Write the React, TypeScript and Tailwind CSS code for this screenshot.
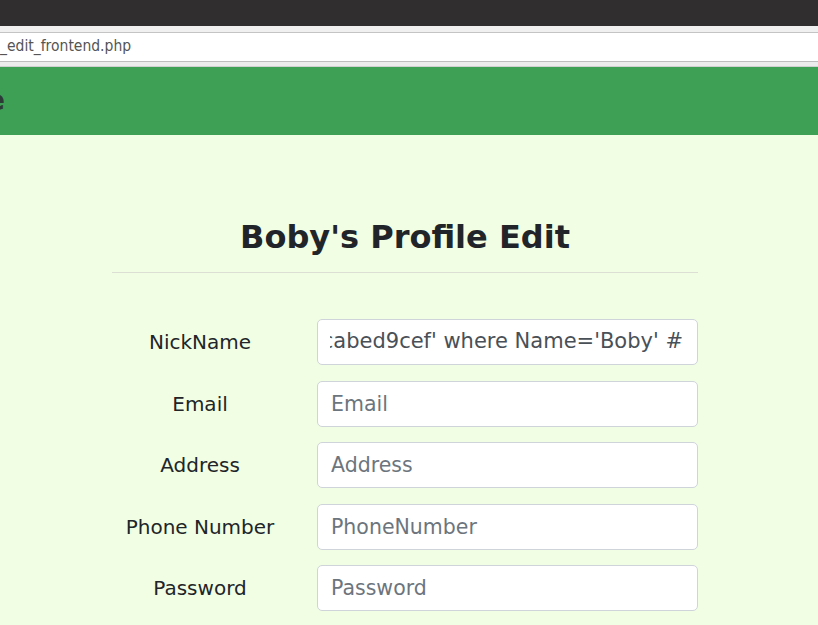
const fields = [
  { label: "Email", placeholder: "Email" },
  { label: "Address", placeholder: "Address" },
  { label: "Phone Number", placeholder: "PhoneNumber" },
  { label: "Password", placeholder: "Password" },
];

export default function App() {
  return (
    <div className="w-[818px] h-[625px] overflow-hidden bg-[#f2fee4] font-['DejaVu_Sans',sans-serif]">
      {/* browser chrome */}
      <div className="h-[26px] bg-[#302e2e]" />
      <div className="h-[7px] bg-[#f0f0f0] border-b border-[#c4c4c4]" />
      <div className="h-[29px] bg-white border-b border-[#bdbdbd] flex items-center">
        <span className="text-[15.5px] text-[#555] font-['DejaVu_Sans_Condensed',sans-serif] leading-none">
          _edit_frontend.php
        </span>
      </div>
      <div className="h-[5px] bg-[#ececec] border-b border-[#d0d0d0]" />

      {/* navbar */}
      <div className="h-[68px] bg-[#3ea055] flex items-center overflow-hidden">
        <span className="-ml-[14px] text-[28px] font-bold text-[#2d3b36] leading-none">e</span>
      </div>

      {/* content */}
      <div className="ml-[112px] w-[586px] pt-[83px]">
        <h2 className="text-center text-[32px] font-bold leading-[38px] text-[#212529]">
          Boby's Profile Edit
        </h2>
        <hr className="mt-[16px] border-0 border-t border-[#dcdfd4]" />

        <div className="mt-[46px] flex flex-col gap-[15.5px]">
          <div className="flex items-center">
            <label className="w-[176px] text-center text-[20px] text-[#212529]">NickName</label>
            <div className="ml-[29px] w-[381px] h-[46px] bg-white border border-[#ced4da] rounded-[5px] pl-[12px] pr-[14px] flex items-center">
              <div className="flex-1 flex justify-end overflow-hidden">
                <span className="whitespace-nowrap text-[21px] text-[#495057]">
                  Boby', Password='9cabed9cef' where Name='Boby' #
                </span>
              </div>
            </div>
          </div>
          {fields.map((f) => (
            <div key={f.label} className="flex items-center">
              <label className="w-[176px] text-center text-[20px] text-[#212529]">{f.label}</label>
              <input
                placeholder={f.placeholder}
                className="ml-[29px] w-[381px] h-[46px] bg-white border border-[#ced4da] rounded-[5px] px-[13px] text-[20.5px] text-[#495057] placeholder:text-[#6c757d] outline-none"
              />
            </div>
          ))}
        </div>
      </div>
    </div>
  );
}
